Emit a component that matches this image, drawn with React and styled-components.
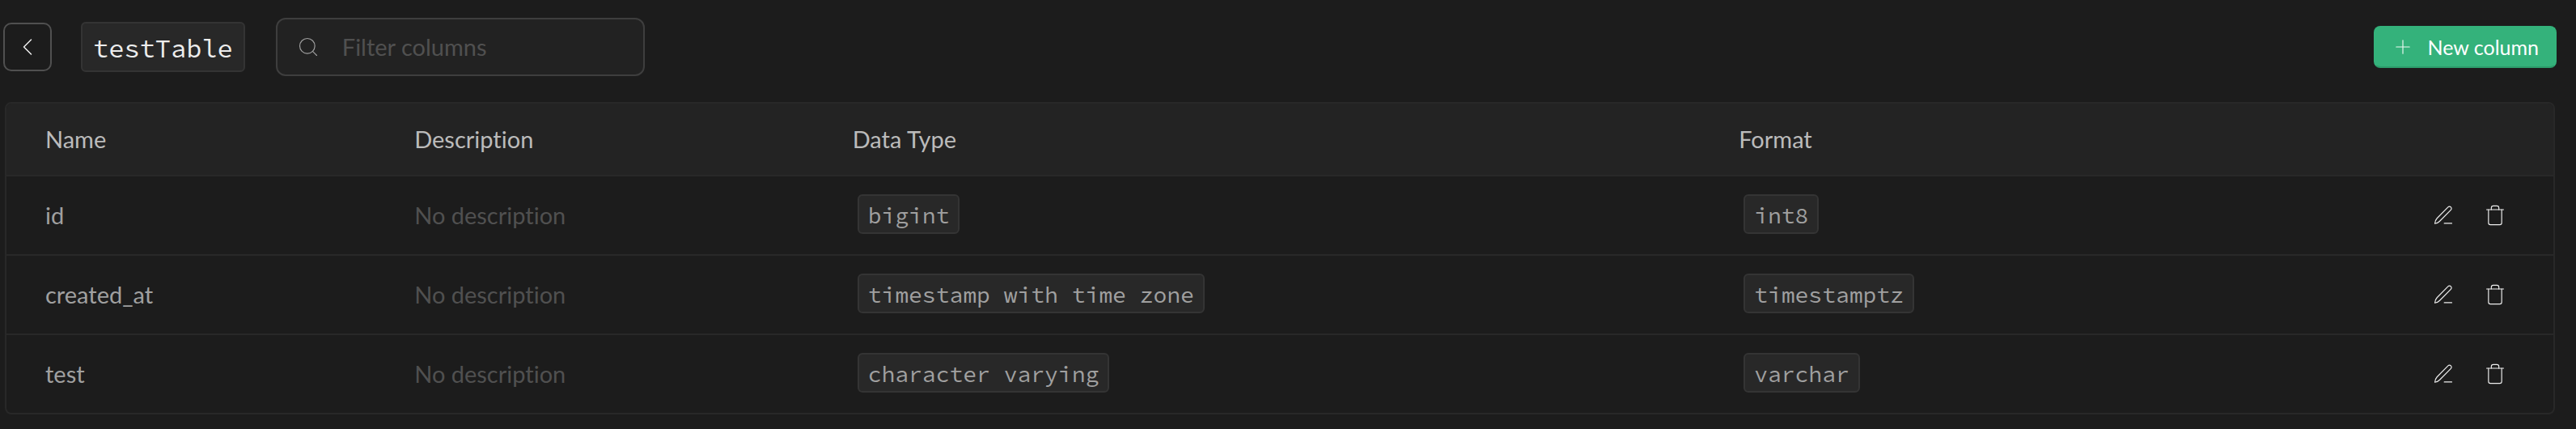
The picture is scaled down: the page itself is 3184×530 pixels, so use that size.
import React, { useState } from "react";
import styled, { createGlobalStyle } from "styled-components";
import { ChevronLeft, Search, Plus, Trash } from "lucide-react";

const GlobalStyle = createGlobalStyle`
  * {
    box-sizing: border-box;
  }
  body {
    margin: 0;
    background: #1c1c1c;
    color: #a0a0a0;
    font-family: Lato, "Liberation Sans", sans-serif;
    font-size: 29px;
    line-height: 40px;
    font-variant-ligatures: none;
  }
  button, input {
    font: inherit;
  }
`
const Page = styled.main`
  padding: 22px 24px 18px 4px;
`
const Toolbar = styled.header`
  display: flex;
  align-items: center;
  justify-content: space-between;
  height: 72px;
`
const ToolbarGroup = styled.div`
  display: flex;
  align-items: center;
`
const BackButton = styled.button`
  display: flex;
  align-items: center;
  justify-content: center;
  width: 60px;
  height: 60px;
  margin-right: 30px;
  padding: 0;
  color: #ededed;
  background: #1c1c1c;
  border: 2px solid #505050;
  border-radius: 10px;
  cursor: pointer;
`
const Code = styled.code`
  display: inline-block;
  font-family: "Source Code Pro", "Liberation Mono", monospace;
  font-size: ${({ $large }) => ($large ? "32px" : "28px")};
  line-height: ${({ $large }) => ($large ? "54px" : "41px")};
  padding: ${({ $large }) => ($large ? "4px 13px 0" : "4px 11px 0")};
  margin: ${({ $large }) => ($large ? "0 6px" : "0 6px 4px")};
  vertical-align: middle;
  color: ${({ $large }) => ($large ? "#ededed" : "#a0a0a0")};
  background: #282828;
  border: 2px solid #343434;
  border-radius: 6px;
`
const SearchField = styled.label`
  display: flex;
  align-items: center;
  gap: 28px;
  width: 456px;
  height: 72px;
  margin-left: 32px;
  padding: 0 24px;
  color: #a0a0a0;
  background: #222222;
  border: 2px solid #3e3e3e;
  border-radius: 12px;
`
const SearchInput = styled.input`
  flex: 1;
  min-width: 0;
  padding: 0;
  color: #ededed;
  background: transparent;
  border: none;
  outline: none;
  &::placeholder {
    color: #505050;
    opacity: 1;
  }
`
const PrimaryButton = styled.button`
  display: flex;
  align-items: center;
  gap: 16px;
  height: 52px;
  padding: 0 20px;
  font-size: 25px;
  line-height: 32px;
  color: #ffffff;
  background: #34b27b;
  border: 2px solid #34b27b;
  border-bottom-color: #2c9c6a;
  border-radius: 8px;
  cursor: pointer;
  svg {
    opacity: 0.9;
  }
`
const TableFrame = styled.div`
  margin: 32px 2px 0;
  border: 2px solid #282828;
  border-radius: 8px;
  overflow: hidden;
`
const Table = styled.table`
  width: 100%;
  table-layout: fixed;
  border-collapse: separate;
  border-spacing: 0;
`
const Column = styled.col`
  width: ${({ $width }) => $width};
`
const HeadCell = styled.th`
  height: 90px;
  padding: 0 32px;
  text-align: left;
  font-weight: 400;
  color: #bbbbbb;
  background: #232323;
  border-bottom: 2px solid #282828;
  &:first-child {
    padding-left: 48px;
  }
`
const Row = styled.tr`
  &:not(:last-child) > td {
    height: 98px;
    border-bottom: 2px solid #282828;
  }
`
const Cell = styled.td`
  height: 96px;
  padding: 0 32px;
  color: ${({ $muted }) => ($muted ? "#505050" : "#a0a0a0")};
  &:first-child {
    padding-left: 48px;
  }
`
const Actions = styled.div`
  display: flex;
  justify-content: flex-end;
  gap: 12px;
  padding-right: 14px;
`
const IconButton = styled.button`
  display: flex;
  padding: 12px;
  color: #ededed;
  background: transparent;
  border: none;
  cursor: pointer;
`

const columns = [
  { name: "id", type: "bigint", format: "int8" },
  { name: "created_at", type: "timestamp with time zone", format: "timestamptz" },
  { name: "test", type: "character varying", format: "varchar" },
];

const PencilIcon = () => (
  <svg width="28" height="28" viewBox="0 0 24 24" fill="none" stroke="currentColor" strokeWidth="1" strokeLinecap="round" strokeLinejoin="round" aria-hidden="true">
    <path d="M13 20.5h8" />
    <path d="M17 3.3a2.1 2.1 0 0 1 3 3L8.2 18.2Q6 20.5 3 20.8 3.2 17.5 5.3 15.2Z" />
  </svg>
)

const App = () => {
  const [filter, setFilter] = useState("");
  const rows = columns.filter(el => el.name.includes(filter));

  return (
    <Page>
      <GlobalStyle />
      <Toolbar>
        <ToolbarGroup>
          <BackButton aria-label="Back">
            <ChevronLeft size={36} strokeWidth={1} />
          </BackButton>
          <Code $large>testTable</Code>
          <SearchField>
            <Search size={28} strokeWidth={1} />
            <SearchInput
              aria-label="Filter columns"
              placeholder="Filter columns"
              value={filter}
              onChange={e => setFilter(e.target.value)}
            />
          </SearchField>
        </ToolbarGroup>
        <PrimaryButton>
          <Plus size={28} strokeWidth={1} />
          New column
        </PrimaryButton>
      </Toolbar>
      <TableFrame>
        <Table>
          <colgroup>
            <Column $width="15%" />
            <Column $width="17.2%" />
            <Column $width="34.8%" />
            <Column />
            <Column $width="10%" />
          </colgroup>
          <thead>
            <tr>
              <HeadCell>Name</HeadCell>
              <HeadCell>Description</HeadCell>
              <HeadCell>Data Type</HeadCell>
              <HeadCell>Format</HeadCell>
              <HeadCell aria-label="Actions" />
            </tr>
          </thead>
          <tbody>
            {rows.map(el => (
              <Row key={el.name}>
                <Cell>{el.name}</Cell>
                <Cell $muted>No description</Cell>
                <Cell><Code>{el.type}</Code></Cell>
                <Cell><Code>{el.format}</Code></Cell>
                <Cell>
                  <Actions>
                    <IconButton aria-label={`Edit ${el.name}`}><PencilIcon /></IconButton>
                    <IconButton aria-label={`Delete ${el.name}`}><Trash size={28} strokeWidth={1} /></IconButton>
                  </Actions>
                </Cell>
              </Row>
            ))}
          </tbody>
        </Table>
      </TableFrame>
    </Page>
  );
};

export default App;
